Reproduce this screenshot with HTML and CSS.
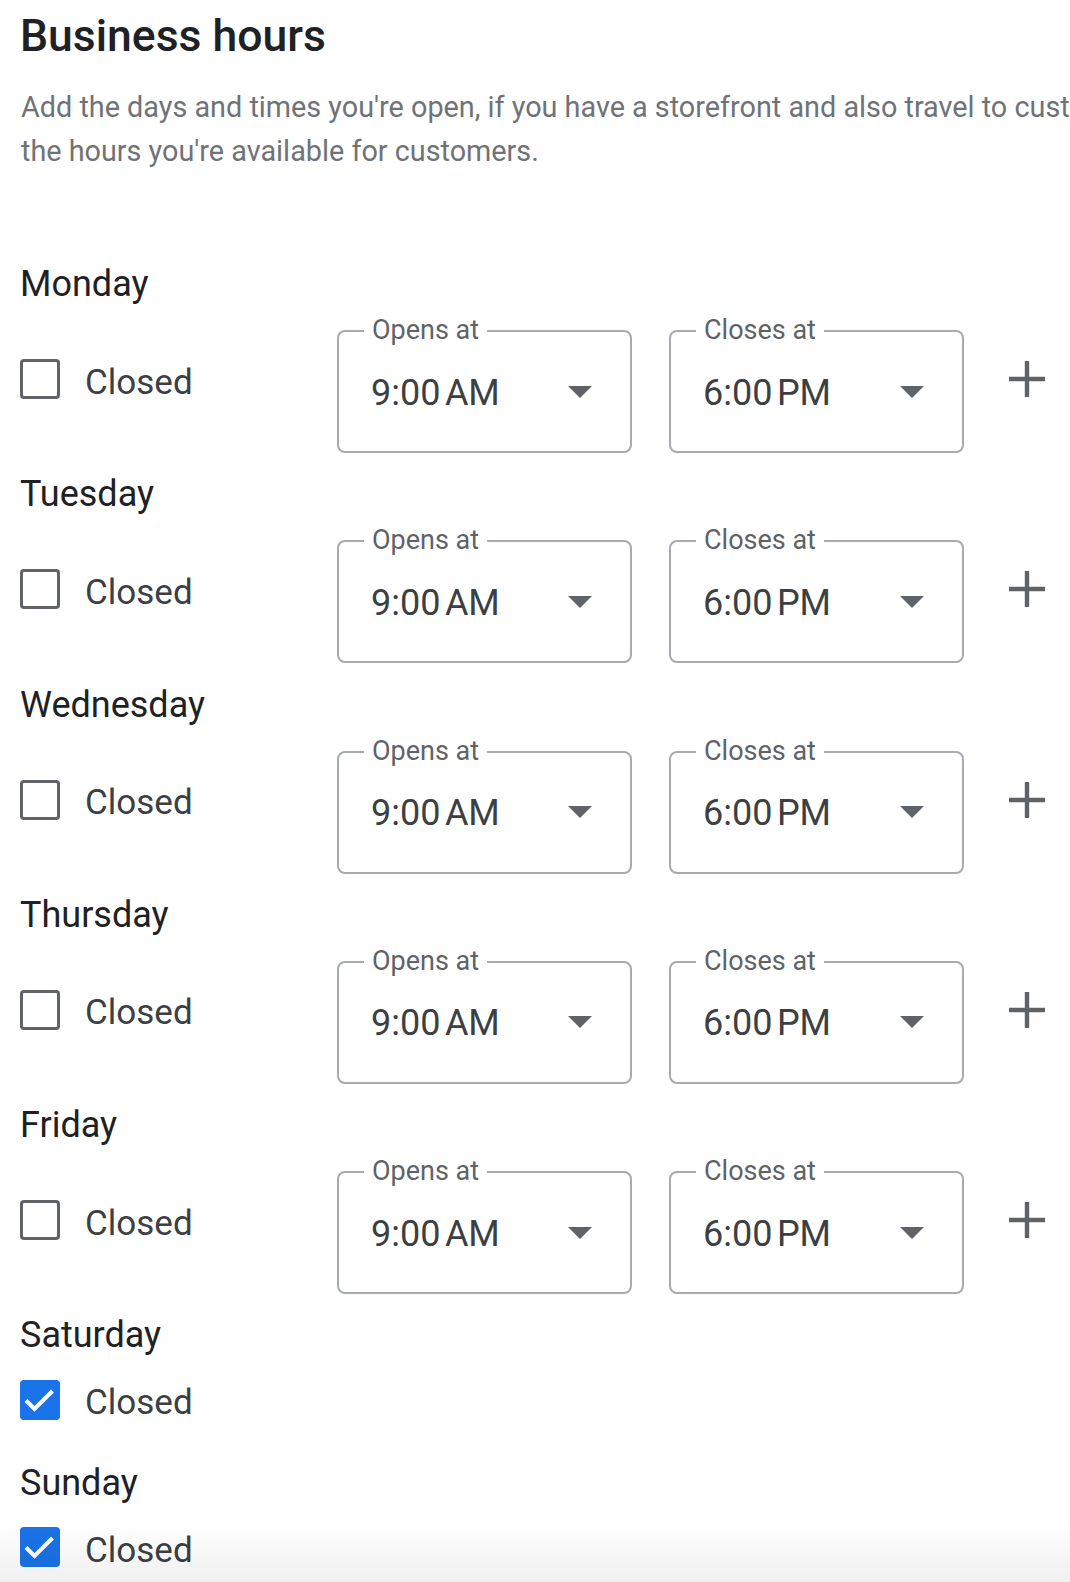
FILE: index.html
```html
<!DOCTYPE html>
<html lang="en">
<head>
  <meta charset="UTF-8" />
  <meta name="viewport" content="width=device-width, initial-scale=1.0"/>
  <title>Business hours</title>
  <link rel="stylesheet" href="styles.css">
</head>
<body>
  <div class="page">
    <h1 class="title">Business hours</h1>
    <p class="intro">Add the days and times you're open, if you have a storefront and also travel to customers, add<br>the hours you're available for customers.</p>

    <div id="week" class="week"></div>
  </div>

  <div class="bottom-fade"></div>

  <script>
    const days = [
      { name: "Monday", closed: false },
      { name: "Tuesday", closed: false },
      { name: "Wednesday", closed: false },
      { name: "Thursday", closed: false },
      { name: "Friday", closed: false },
      { name: "Saturday", closed: true },
      { name: "Sunday", closed: true }
    ];

    const arrow = '<svg class="arrow" width="24" height="12" viewBox="0 0 24 12"><path d="M0 0h24L12 12z" fill="#5f6368"/></svg>';
    const tick = '<svg width="40" height="40" viewBox="0 0 40 40"><path d="M6 20.5l8.5 8.5L32.5 11" fill="none" stroke="#fff" stroke-width="4"/></svg>';
    const plus = '<svg width="38" height="38" viewBox="0 0 38 38"><path d="M19 1v36M1 19h36" stroke="#5f6368" stroke-width="4.4"/></svg>';

    function field(label, value) {
      return `<div class="field">
        <span class="field-label">${label}</span>
        <span class="field-value">${value}</span>
        ${arrow}
      </div>`;
    }

    const week = document.getElementById("week");
    days.forEach(day => {
      const el = document.createElement("div");
      el.className = day.closed ? "day is-closed" : "day";
      let html = `<div class="day-name">${day.name}</div><div class="day-row">`;
      html += `<label class="closed"><span class="box${day.closed ? " checked" : ""}">${day.closed ? tick : ""}</span><span class="closed-text">Closed</span></label>`;
      if (!day.closed) {
        html += field("Opens at", "9:00\u202fAM");
        html += field("Closes at", "6:00\u202fPM");
        html += `<button class="add">${plus}</button>`;
      }
      html += "</div>";
      el.innerHTML = html;
      week.appendChild(el);
    });
  </script>
</body>
</html>
```

FILE: styles.css
```css
body {
  margin: 0;
  padding: 0;
  font-family: Roboto, "Noto Sans", sans-serif;
  background: #fff;
  overflow: hidden;
}

.page {
  padding: 10px 0 0 20px;
  white-space: nowrap;
  overflow: hidden;
}

.title {
  margin: 0;
  font-size: 44.5px;
  line-height: 52px;
  font-weight: 500;
  color: #202124;
}

.intro {
  margin: 23px 0 0 1px;
  font-size: 28.8px;
  line-height: 44px;
  color: #6f7378;
  overflow: hidden;
}

.week {
  margin-top: 85px;
}

.day {
  margin-bottom: 15.3px;
}

.day.is-closed {
  margin-bottom: 37px;
}

.day-name {
  height: 48px;
  line-height: 52px;
  font-size: 36px;
  color: #202124;
  margin-bottom: 24px;
}

.is-closed .day-name {
  margin-bottom: 22.5px;
}

.day-row {
  display: flex;
  align-items: flex-start;
}

.closed {
  flex: 0 0 317px;
  display: flex;
  align-items: center;
  gap: 25px;
  height: 40px;
  margin-top: 29px;
  font-size: 35px;
  color: #3c4043;
}

.closed-text {
  padding-top: 6px;
}

.is-closed .closed {
  margin-top: 0;
}

.box {
  width: 40px;
  height: 40px;
  box-sizing: border-box;
  border: 3px solid #5f6368;
  border-radius: 4px;
  display: flex;
  align-items: center;
  justify-content: center;
}

.box.checked {
  background: #1a73e8;
  border: none;
}

.field {
  position: relative;
  width: 295px;
  height: 123px;
  box-sizing: border-box;
  border: 2px solid #a7aaae;
  border-radius: 8px;
  display: flex;
  align-items: center;
  padding: 0 38px 0 32px;
  margin-right: 37px;
}

.field-label {
  position: absolute;
  top: -17px;
  left: 25px;
  padding: 0 8px;
  background: #fff;
  font-size: 27px;
  line-height: 30px;
  color: #5f6368;
}

.field-value {
  flex: 1;
  font-size: 36px;
  color: #3c4043;
  margin-top: 2px;
}

.arrow {
  display: block;
}

.add {
  border: none;
  background: none;
  padding: 0;
  margin: 30px 0 0 7px;
  width: 38px;
  height: 38px;
  cursor: pointer;
}

.bottom-fade {
  position: fixed;
  left: 0;
  right: 0;
  bottom: 0;
  height: 60px;
  background: linear-gradient(to bottom, rgba(0, 0, 0, 0), rgba(0, 0, 0, 0.06));
  pointer-events: none;
}
```
